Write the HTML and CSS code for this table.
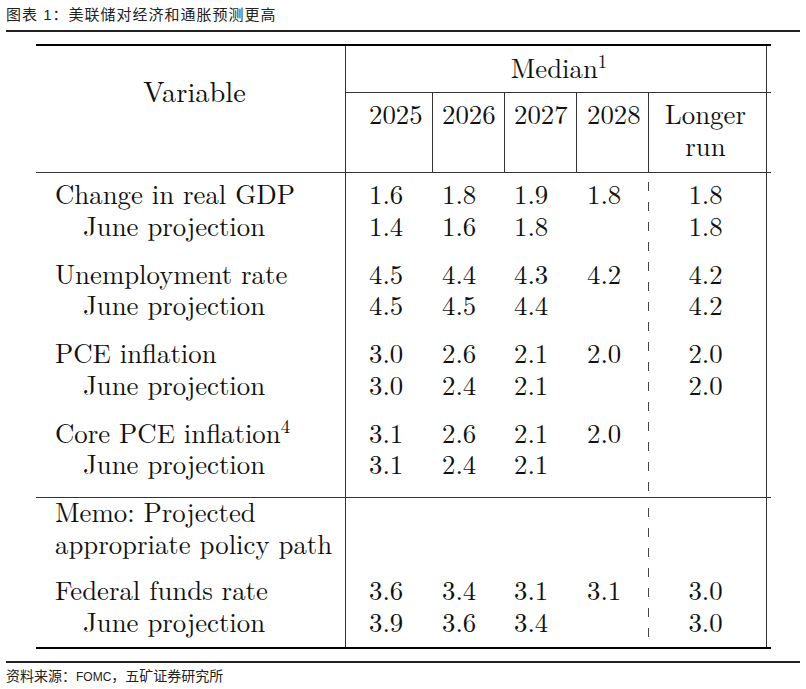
FILE: index.html
```html
<!DOCTYPE html>
<html lang="zh-CN">
<head>
<meta charset="utf-8">
<title>美联储对经济和通胀预测更高</title>
<link rel="stylesheet" href="styles.css">
</head>
<body>
<div class="fig">
  <div class="caption">图表 1：美联储对经济和通胀预测更高</div>
  <div class="table">
    <div class="thead">
      <div class="var">Variable</div>
      <div class="median">Median<sup class="fn">1</sup></div>
      <div class="edge-top"></div>
      <div class="yr c2">2025</div>
      <div class="yr c3">2026</div>
      <div class="yr c4">2027</div>
      <div class="yr c5">2028</div>
      <div class="lr hd">Longer<br>run</div>
      <div></div>
    </div>
    <div class="tbody">
      <div class="tr first"><div class="lab">Change in real GDP</div><div class="n c2">1.6</div><div class="n c3">1.8</div><div class="n c4">1.9</div><div class="n c5">1.8</div><div class="lr">1.8</div></div>
      <div class="tr"><div class="lab sub">June projection</div><div class="n c2">1.4</div><div class="n c3">1.6</div><div class="n c4">1.8</div><div class="n c5"></div><div class="lr">1.8</div></div>
      <div class="tr gap"><div class="lab">Unemployment rate</div><div class="n c2">4.5</div><div class="n c3">4.4</div><div class="n c4">4.3</div><div class="n c5">4.2</div><div class="lr">4.2</div></div>
      <div class="tr"><div class="lab sub">June projection</div><div class="n c2">4.5</div><div class="n c3">4.5</div><div class="n c4">4.4</div><div class="n c5"></div><div class="lr">4.2</div></div>
      <div class="tr gap"><div class="lab">PCE inflation</div><div class="n c2">3.0</div><div class="n c3">2.6</div><div class="n c4">2.1</div><div class="n c5">2.0</div><div class="lr">2.0</div></div>
      <div class="tr"><div class="lab sub">June projection</div><div class="n c2">3.0</div><div class="n c3">2.4</div><div class="n c4">2.1</div><div class="n c5"></div><div class="lr">2.0</div></div>
      <div class="tr gap"><div class="lab">Core PCE inflation<sup class="fn">4</sup></div><div class="n c2">3.1</div><div class="n c3">2.6</div><div class="n c4">2.1</div><div class="n c5">2.0</div><div class="lr"></div></div>
      <div class="tr last"><div class="lab sub">June projection</div><div class="n c2">3.1</div><div class="n c3">2.4</div><div class="n c4">2.1</div><div class="n c5"></div><div class="lr"></div></div>
    </div>
    <div class="tbody memo">
      <div class="tr"><div class="lab">Memo: Projected</div><div class="n c2"></div><div class="n c3"></div><div class="n c4"></div><div class="n c5"></div><div class="lr"></div></div>
      <div class="tr"><div class="lab">appropriate policy path</div><div class="n c2"></div><div class="n c3"></div><div class="n c4"></div><div class="n c5"></div><div class="lr"></div></div>
      <div class="tr gap2"><div class="lab">Federal funds rate</div><div class="n c2">3.6</div><div class="n c3">3.4</div><div class="n c4">3.1</div><div class="n c5">3.1</div><div class="lr">3.0</div></div>
      <div class="tr end"><div class="lab sub">June projection</div><div class="n c2">3.9</div><div class="n c3">3.6</div><div class="n c4">3.4</div><div class="n c5"></div><div class="lr">3.0</div></div>
    </div>
  </div>
  <div class="source">资料来源：<span class="lat">FOMC</span>，五矿证券研究所</div>
</div>
</body>
</html>
```

FILE: styles.css
```css
* {
  box-sizing: border-box;
}

body {
  margin: 0;
  background: #ffffff;
  color: #111111;
}

.fig {
  width: 794px;
  margin: 0 6px;
}

.caption {
  height: 32px;
  line-height: 30px;
  border-bottom: 2px solid #222222;
  font-family: "Liberation Sans", "Noto Sans CJK SC", sans-serif;
  font-size: 15px;
  letter-spacing: 1px;
  color: #222222;
  white-space: nowrap;
}

.table {
  width: 735px;
  margin: 12px 0 0 30px;
  border-top: 2px solid #000000;
  border-bottom: 2px solid #000000;
  font-family: "Latin Modern Roman", "Liberation Serif", serif;
  font-size: 26.8px;
  line-height: 27.75px;
  color: #111111;
}

.thead,
.tr {
  display: grid;
  grid-template-columns: 310px 87px 72px 72px 72px 118px 4px;
}

.thead {
  grid-template-rows: 47px 79px;
  border-bottom: 1px solid #333333;
}

.var {
  grid-row: 1 / 3;
  border-right: 1px solid #333333;
  padding: 31px 0 0 8px;
  text-align: center;
  font-size: 28.4px;
}

.median {
  grid-column: 2 / 7;
  border-right: 1px solid #333333;
  border-bottom: 1px solid #333333;
  padding: 8px 0 0 6px;
  text-align: center;
}

.edge-top {
  border-bottom: 1px solid #333333;
}

.yr {
  padding-top: 7px;
  border-right: 1px solid #333333;
}

.c2 {
  padding-left: 23px;
}

.c3,
.c4 {
  padding-left: 9px;
}

.c5 {
  padding-left: 10px;
}

.lr {
  border-right: 1px solid #333333;
  text-align: center;
  padding-right: 4px;
}

.lr.hd {
  padding-top: 5px;
  line-height: 31.75px;
}

.lab {
  border-right: 1px solid #333333;
  padding-left: 19px;
  white-space: nowrap;
}

.lab.sub {
  padding-left: 47px;
}

.tr > * {
  padding-bottom: 4px;
}

.tbody {
  border-bottom: 1px solid #333333;
  background-image: linear-gradient(#444444 9px, transparent 9px);
  background-size: 1px 20px;
  background-position: 612px 9px;
  background-repeat: repeat-y;
}

.tbody.memo {
  border-bottom: none;
  background-position: 612px 10px;
}

.tr.first > * {
  padding-top: 7px;
}

.tr.gap > * {
  padding-top: 16px;
}

.tr.last > * {
  padding-bottom: 19px;
}

.tr.gap2 > * {
  padding-top: 14.5px;
}

.tr.end > * {
  padding-bottom: 11.5px;
}

.fn {
  font-size: 18.8px;
  line-height: 0;
  vertical-align: 10px;
}

.source {
  margin-top: 12px;
  border-top: 2px solid #222222;
  font-family: "Liberation Sans", "Noto Sans CJK SC", sans-serif;
  font-size: 14px;
  line-height: 26px;
  color: #222222;
  white-space: nowrap;
}

.source .lat {
  font-size: 12px;
}
```
